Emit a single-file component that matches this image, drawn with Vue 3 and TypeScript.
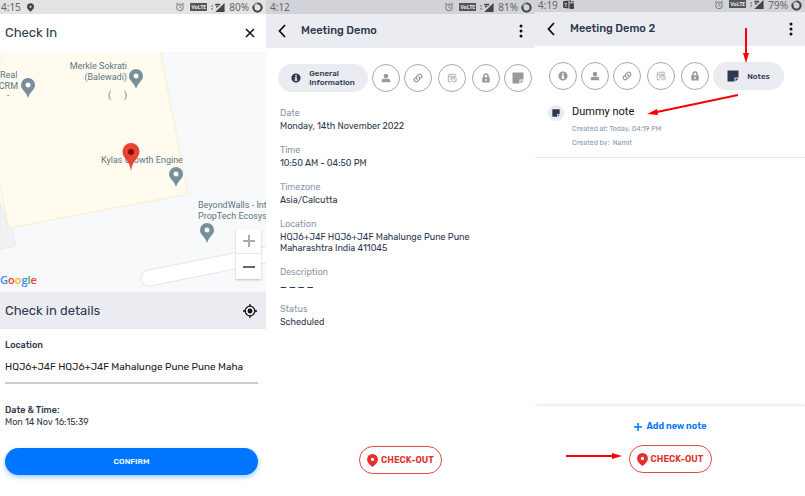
<script setup lang="ts">
import { ref } from 'vue'

type IconName = 'info' | 'person' | 'link' | 'activity' | 'lock' | 'note'
interface Tab { icon: IconName; label: string }
interface Field { label: string; value: string }

const tabs: Tab[] = [
  { icon: 'info', label: 'General Information' },
  { icon: 'person', label: 'Participants' },
  { icon: 'link', label: 'Related to' },
  { icon: 'activity', label: 'Activity' },
  { icon: 'lock', label: 'Access' },
  { icon: 'note', label: 'Notes' },
]

const fields: Field[] = [
  { label: 'Date', value: 'Monday, 14th November 2022' },
  { label: 'Time', value: '10:50 AM - 04:50 PM' },
  { label: 'Timezone', value: 'Asia/Calcutta' },
  { label: 'Location', value: 'HQJ6+J4F HQJ6+J4F Mahalunge Pune Pune Maharashtra India 411045' },
  { label: 'Description', value: '_ _ _ _' },
  { label: 'Status', value: 'Scheduled' },
]

const screens = [
  { key: 'info', time: '4:12', battery: '81%', title: 'Meeting Demo', active: 'info' as IconName },
  { key: 'notes', time: '4:19', battery: '79%', title: 'Meeting Demo 2', active: 'note' as IconName },
]

const location = ref('HQJ6+J4F HQJ6+J4F Mahalunge Pune Pune Maharashtra India 411045')
</script>

<template>
  <svg class="defs" aria-hidden="true">
    <symbol id="info" viewBox="0 0 24 24">
      <path fill-rule="evenodd" d="M12 1a11 11 0 1 0 0 22 11 11 0 0 0 0-22zM10 5h4v3.500h-4zM8.500 10H14v6h1.500v2.500h-7V16H10v-3.500H8.500z" />
    </symbol>
    <symbol id="person" viewBox="0 0 24 24">
      <circle cx="12" cy="7" r="5.500" />
      <path d="M2 22v-4c0-3 3-4 5-4h10c2 0 5 1 5 4v4z" />
    </symbol>
    <symbol id="link" viewBox="0 0 24 24">
      <g fill="none" stroke="currentColor" stroke-width="3" stroke-linecap="round">
        <path d="M10 15a5 5 0 0 1-1-7l4-4a5 5 0 0 1 7 7l-2 2" />
        <path d="M14 9a5 5 0 0 1 1 7l-4 4a5 5 0 0 1-7-7l2-2" />
      </g>
    </symbol>
    <symbol id="activity" viewBox="0 0 24 24">
      <g fill="none" stroke="currentColor" stroke-width="1.800">
        <path d="M9 21H3V6q0-3 3-3h13q2 0 2 3v2M3 8h17M7 12h5M7 16h2" />
        <circle cx="17" cy="16" r="5.500" />
        <path d="M17 12.500V16l2.500 1.500" />
      </g>
    </symbol>
    <symbol id="lock" viewBox="0 0 24 24">
      <path fill-rule="evenodd" d="M3 10h2.500V7a6.500 6.500 0 0 1 13 0v3H21v13H3zM9 10h6V7a3 3 0 0 0-6 0zM10.500 14v5h3v-5z" />
    </symbol>
    <symbol id="note" viewBox="0 0 24 24">
      <path d="M1 1h22v14h-8v8H1zM17 17h6l-6 6z" />
    </symbol>
    <symbol id="alarm" viewBox="0 0 24 24">
      <g fill="none" stroke="currentColor" stroke-width="2">
        <circle cx="12" cy="13" r="8" />
        <path d="M12 8v5l4 2M2 6l5-4M22 6l-5-4" />
      </g>
    </symbol>
    <symbol id="signal" viewBox="0 0 40 26">
      <path d="M39 0v26H12zM3 6l3 4H0zM0 16h6l-3 4zM12 2h14v5H12zM15 9h7l-7 6z" />
    </symbol>
    <symbol id="ring" viewBox="0 0 24 24">
      <circle cx="12" cy="12" r="9" fill="none" stroke="currentColor" stroke-width="4" opacity="0.5" />
      <path d="M12 3a9 9 0 1 1-8 5" fill="none" stroke="currentColor" stroke-width="4" />
    </symbol>
    <symbol id="pin" viewBox="0 0 14 20">
      <path fill-rule="evenodd" d="M7 0a7 7 0 0 0-7 7c0 5 5 6 7 13 2-7 7-8 7-13a7 7 0 0 0-7-7zM7 4.500a2.500 2.500 0 1 1 0 5 2.500 2.500 0 0 1 0-5z" />
    </symbol>
    <symbol id="drop" viewBox="0 0 20 24">
      <path fill-rule="evenodd" d="M10 0A10 10 0 0 0 0 10c0 7 8 12 10 14 2-2 10-7 10-14A10 10 0 0 0 10 0zM10 7a3 3 0 1 1 0 6 3 3 0 0 1 0-6z" />
    </symbol>
    <symbol id="dots" viewBox="0 0 4 14">
      <circle cx="2" cy="2" r="1.500" /><circle cx="2" cy="7" r="1.500" /><circle cx="2" cy="12" r="1.500" />
    </symbol>
    <symbol id="back" viewBox="0 0 8 14">
      <path d="M7 1 1.500 7 7 13" fill="none" stroke="currentColor" stroke-width="1.800" />
    </symbol>
  </svg>

  <main class="board">
    <section class="phone checkin">
      <div class="status light">
        <span class="time">4:15</span>
        <svg class="status-pin"><use href="#drop" /></svg>
        <span class="grow"></span>
        <svg class="alarm"><use href="#alarm" /></svg>
        <span class="volte">VoLTE</span>
        <svg class="signal"><use href="#signal" /></svg>
        <span>80%</span>
        <svg class="ring"><use href="#ring" /></svg>
      </div>
      <header class="head">
        <h1>Check In</h1>
        <button class="icon-button" aria-label="Close">
          <svg class="close" viewBox="0 0 10 10"><path d="m1 1 8 8M9 1 1 9" stroke="currentColor" stroke-width="1.500" /></svg>
        </button>
      </header>

      <div class="map">
        <svg class="map-art" viewBox="0 0 266 240" preserveAspectRatio="xMinYMin slice">
          <rect width="266" height="240" fill="#f7f9fb" />
          <path d="M0 151 9 176l3 0 4 18L0 197z" fill="#f1f2f4" stroke="#e8eaec" />
          <path d="M0-2H160L188 142 9 176-2 125z" fill="#fffbef" stroke="#f9efcb" />
          <path d="M149 226 275 201" stroke="#e5e7ea" stroke-width="17" stroke-linecap="round" />
          <path d="M149 226 275 201" stroke="#fff" stroke-width="15" stroke-linecap="round" />
          <g class="place">
            <text x="0" y="26">Real</text>
            <text x="18" y="37" text-anchor="end">CRM</text>
            <text x="7" y="46">-</text>
            <text x="127" y="17" text-anchor="end">Merkle Sokrati</text>
            <text x="127" y="28" text-anchor="end">(Balewadi)</text>
            <text x="108" y="46">(</text>
            <text x="124" y="46">)</text>
            <text x="101" y="111">Kylas Growth Engine</text>
            <text x="198" y="156">BeyondWalls - Int</text>
            <text x="198" y="167">PropTech Ecosys</text>
          </g>
          <g fill="#78909c">
            <use href="#pin" x="21" y="26" width="14" height="20" />
            <use href="#pin" x="129" y="17" width="14" height="20" />
            <use href="#pin" x="169" y="115" width="14" height="20" />
            <use href="#pin" x="200" y="171" width="14" height="20" />
          </g>
          <path d="M131 91a8.500 8.500 0 0 0-8.500 8.500c0 7 7 8 8.500 19.500 1.500-11.500 8.500-12.500 8.500-19.500A8.500 8.500 0 0 0 131 91z" fill="#ea4335" />
          <circle cx="131" cy="100" r="3" fill="#7b1008" />
          <text class="google" x="0" y="232"><tspan fill="#4285f4">G</tspan><tspan fill="#ea4335">o</tspan><tspan fill="#fbbc05">o</tspan><tspan fill="#4285f4">g</tspan><tspan fill="#34a853">l</tspan><tspan fill="#ea4335">e</tspan></text>
        </svg>
        <div class="zoom">
          <button aria-label="Zoom in" class="muted"><svg viewBox="0 0 12 12"><path d="M6 0v12M0 6h12" stroke="currentColor" stroke-width="2" /></svg></button>
          <button aria-label="Zoom out"><svg viewBox="0 0 12 12"><path d="M0 6h12" stroke="currentColor" stroke-width="2" /></svg></button>
        </div>
      </div>

      <div class="details-bar">
        <h2>Check in details</h2>
        <button class="icon-button" aria-label="Use current location">
          <svg class="target" viewBox="0 0 16 16">
            <circle cx="8" cy="8" r="5.500" fill="none" stroke="currentColor" stroke-width="1.500" />
            <circle cx="8" cy="8" r="2.800" />
            <path d="M8 0v3M8 13v3M0 8h3M13 8h3" stroke="currentColor" stroke-width="1.500" />
          </svg>
        </button>
      </div>

      <form class="form" @submit.prevent>
        <label for="location">Location</label>
        <input id="location" v-model="location" type="text" />
        <p class="stamp"><strong>Date &amp; Time:</strong><span>Mon 14 Nov 16:15:39</span></p>
        <button class="confirm" type="submit">CONFIRM</button>
      </form>
    </section>

    <section v-for="s in screens" :key="s.key" class="phone" :class="s.key">
      <div class="status">
        <span class="time">{{ s.time }}</span>
        <svg v-if="s.key === 'notes'" class="teams" viewBox="0 0 24 20">
          <path d="M0 3 12 1v18L0 17zM3 7v2h2v6h2V9h2V7zM14 7h10v7a5 5 0 0 1-10 4z" fill-rule="evenodd" />
          <circle cx="16" cy="3" r="2.500" /><circle cx="21.500" cy="4" r="2" />
        </svg>
        <span class="grow"></span>
        <svg class="alarm"><use href="#alarm" /></svg>
        <span class="volte">VoLTE</span>
        <svg class="signal"><use href="#signal" /></svg>
        <span>{{ s.battery }}</span>
        <svg class="ring"><use href="#ring" /></svg>
      </div>
      <header class="head shaded">
        <button class="icon-button" aria-label="Back"><svg class="back"><use href="#back" /></svg></button>
        <h1>{{ s.title }}</h1>
        <button class="icon-button" aria-label="More options"><svg class="dots"><use href="#dots" /></svg></button>
      </header>

      <nav class="tabs">
        <button
          v-for="t in tabs"
          :key="t.icon"
          :class="['tab', t.icon, { active: t.icon === s.active }]"
          :aria-label="t.label"
        >
          <svg><use :href="'#' + t.icon" /></svg>
          <span v-if="t.icon === s.active">{{ t.label }}</span>
        </button>
      </nav>

      <dl v-if="s.key === 'info'" class="fields">
        <div v-for="f in fields" :key="f.label">
          <dt>{{ f.label }}</dt>
          <dd>{{ f.value }}</dd>
        </div>
      </dl>

      <article v-else class="note-row">
        <span class="badge"><svg><use href="#note" /></svg></span>
        <div>
          <h2>Dummy note</h2>
          <p>Created at: Today, 04:19 PM</p>
          <p>Created by:&nbsp; Namit</p>
        </div>
      </article>

      <footer class="foot">
        <button v-if="s.key === 'notes'" class="add">
          <svg viewBox="0 0 8 8"><path d="M4 0v8M0 4h8" stroke="currentColor" stroke-width="1.500" /></svg>
          Add new note
        </button>
        <button class="checkout"><svg><use href="#drop" /></svg>CHECK-OUT</button>
      </footer>

      <svg v-if="s.key === 'notes'" class="arrows" viewBox="0 0 270 496" preserveAspectRatio="xMidYMin meet" aria-hidden="true">
        <g stroke="#ff0000" stroke-width="2">
          <path d="M211 28v27M203 95 122 112M31 456h48" />
        </g>
        <path d="M208 53h6l-3 10zM112 114l10-5 1 6zM77 453v6l10-3z" fill="#ff0000" />
      </svg>
    </section>
  </main>
</template>

<style>
body {
  margin: 0;
  background: #fff;
}
</style>

<style scoped>
* {
  box-sizing: border-box;
}
.defs {
  position: absolute;
  width: 0;
  height: 0;
}
.board {
  display: grid;
  grid-template-columns: 266fr 269fr 270fr;
  min-height: 100vh;
  font-family: Rubik, Inter, Roboto, sans-serif;
  font-size: 9px;
  line-height: 11px;
  color: #2e384d;
}
.phone {
  position: relative;
  display: flex;
  flex-direction: column;
  min-width: 0;
  overflow: hidden;
  background: #fff;
}
h1, h2, p, dl, dd {
  margin: 0;
}
svg {
  fill: currentColor;
  flex: none;
}
button {
  font: inherit;
  color: inherit;
  background: none;
  border: 0;
  padding: 0;
  cursor: pointer;
}

.status {
  display: flex;
  align-items: center;
  height: 14px;
  padding: 0 3px 0 4px;
  background: #d2d3d8;
  color: #666;
  font: 10px/14px "Noto Sans", "Open Sans", sans-serif;
}
.status.light {
  background: #e3e3e3;
  padding: 0 3px 0 1px;
}
.notes .status {
  height: 12px;
  padding-left: 3px;
  line-height: 10px;
  align-items: flex-start;
}
.grow {
  flex: 1;
}
.status-pin {
  width: 7px;
  height: 9px;
  margin-left: 6px;
  color: #444;
}
.teams {
  width: 11px;
  height: 9px;
  margin-left: 5px;
  color: #444;
}
.alarm {
  width: 10px;
  height: 10px;
}
.volte {
  margin: 0 4px 0 5px;
  width: 17px;
  background: #555;
  color: #eee;
  font-size: 5px;
  font-weight: 700;
  line-height: 8px;
  text-align: center;
}
.signal {
  width: 14px;
  height: 9px;
  margin-right: 4px;
  color: #444;
}
.ring {
  width: 11px;
  height: 11px;
  margin-left: 3px;
  color: #444;
}

.head {
  display: flex;
  align-items: center;
  height: 38px;
  padding: 0 11px 0 5px;
}
.head h1 {
  flex: 1;
  font-size: 13px;
  line-height: 16px;
  font-weight: 400;
}
.head.shaded {
  height: 34px;
  padding: 0 12px;
  background: #ebecf1;
}
.head.shaded h1 {
  padding-left: 15px;
  font-size: 11px;
  font-weight: 500;
}
.icon-button {
  display: flex;
  color: #111;
}
.close {
  width: 10px;
  height: 10px;
}
.back {
  width: 8px;
  height: 14px;
}
.dots {
  width: 4px;
  height: 14px;
}

.map {
  position: relative;
  height: 240px;
  overflow: hidden;
  background: #f7f9fb;
}
.map-art {
  display: block;
  width: 100%;
  height: 100%;
}
.place {
  font: 9px Roboto, sans-serif;
  fill: #607580;
}
.google {
  font: 600 11px "Open Sans", sans-serif;
}
.zoom {
  position: absolute;
  right: 5px;
  bottom: 13px;
  width: 25px;
  background: #fff;
  box-shadow: 0 1px 2px rgba(0, 0, 0, 0.25);
}
.zoom button {
  display: flex;
  align-items: center;
  justify-content: center;
  width: 25px;
  height: 25px;
  color: #666;
}
.zoom .muted {
  color: #aaa;
  border-bottom: 1px solid #e6e6e6;
}
.zoom svg {
  width: 12px;
  height: 12px;
}

.details-bar {
  display: flex;
  align-items: center;
  justify-content: space-between;
  height: 37px;
  padding: 0 9px 0 5px;
  background: #ebecf1;
}
.details-bar h2 {
  font-size: 13px;
  line-height: 16px;
  font-weight: 400;
}
.target {
  width: 14px;
  height: 14px;
}
.form {
  display: flex;
  flex-direction: column;
  padding: 11px 8px 20px 5px;
}
.form label {
  font-weight: 500;
}
.form input {
  width: 100%;
  height: 33px;
  padding: 0 14px 0 0;
  border: 0;
  border-bottom: 2px solid #ccc;
  outline: 0;
  font: inherit;
  font-size: 10px;
  color: #222;
  background: none;
}
.stamp {
  display: flex;
  flex-direction: column;
  margin: 20px 0;
  line-height: 12px;
}
.stamp strong {
  font-weight: 500;
}
.form .confirm {
  height: 27px;
  border-radius: 14px;
  background: #0076ff;
  box-shadow: 0 2px 5px rgba(0, 118, 255, 0.4);
  color: #fff;
  font-size: 8px;
  font-weight: 500;
}

.tabs {
  display: flex;
  gap: 4px;
  padding: 16px 0 0 12px;
}
.notes .tabs {
  padding-left: 14px;
}
.tab {
  display: flex;
  flex: none;
  align-items: center;
  justify-content: center;
  width: 28px;
  height: 28px;
  border: 1px solid #aaa;
  border-radius: 14px;
  color: #999;
}
.tab svg {
  width: 10px;
  height: 10px;
}
.tab.note svg {
  width: 12px;
  height: 12px;
}
.tab.activity {
  margin: 0 2px;
}
.tab.active {
  gap: 8px;
  width: 90px;
  border: 0;
  background: #ebecf1;
  color: #2e384d;
  font-size: 8px;
  line-height: 9px;
  font-weight: 500;
  text-align: left;
}
.tab.active span {
  width: min-content;
}
.tab.note.active {
  width: 71px;
}

.fields {
  display: flex;
  flex-direction: column;
  gap: 13px;
  padding: 16px 54px 0 14px;
}
.fields dt {
  margin-bottom: 2px;
  color: #8798ad;
}

.note-row {
  display: flex;
  gap: 8px;
  padding: 15px 13px 7px;
  border-bottom: 1px solid #e4e4e6;
}
.badge {
  display: flex;
  flex: none;
  align-items: center;
  justify-content: center;
  width: 16px;
  height: 16px;
  border-radius: 8px;
  background: #ebecf1;
}
.badge svg {
  width: 8px;
  height: 8px;
}
.note-row h2 {
  margin-bottom: 4px;
  font-family: Roboto, sans-serif;
  font-size: 11px;
  line-height: 13px;
  font-weight: 400;
  color: #111;
}
.note-row p {
  font-size: 7px;
  line-height: 14px;
  color: #8798ad;
}

.foot {
  display: flex;
  flex-direction: column;
  align-items: center;
  gap: 13px;
  margin-top: auto;
  padding-bottom: 22px;
}
.notes .foot {
  padding: 15px 0 23px;
  border-top: 1px solid #e9ebe6;
  box-shadow: 0 -1px 2px rgba(0, 0, 0, 0.06);
}
.add {
  display: flex;
  align-items: center;
  gap: 5px;
  color: #0076ff;
  font-weight: 600;
}
.add svg {
  width: 8px;
  height: 8px;
}
.checkout {
  display: flex;
  align-items: center;
  justify-content: center;
  gap: 3px;
  width: 83px;
  height: 28px;
  border: 1px solid #df4a45;
  border-radius: 14px;
  color: #e32f2a;
  font-weight: 600;
}
.checkout svg {
  width: 11px;
  height: 13px;
}
.arrows {
  position: absolute;
  inset: 0 0 auto;
  width: 100%;
  pointer-events: none;
}
</style>
